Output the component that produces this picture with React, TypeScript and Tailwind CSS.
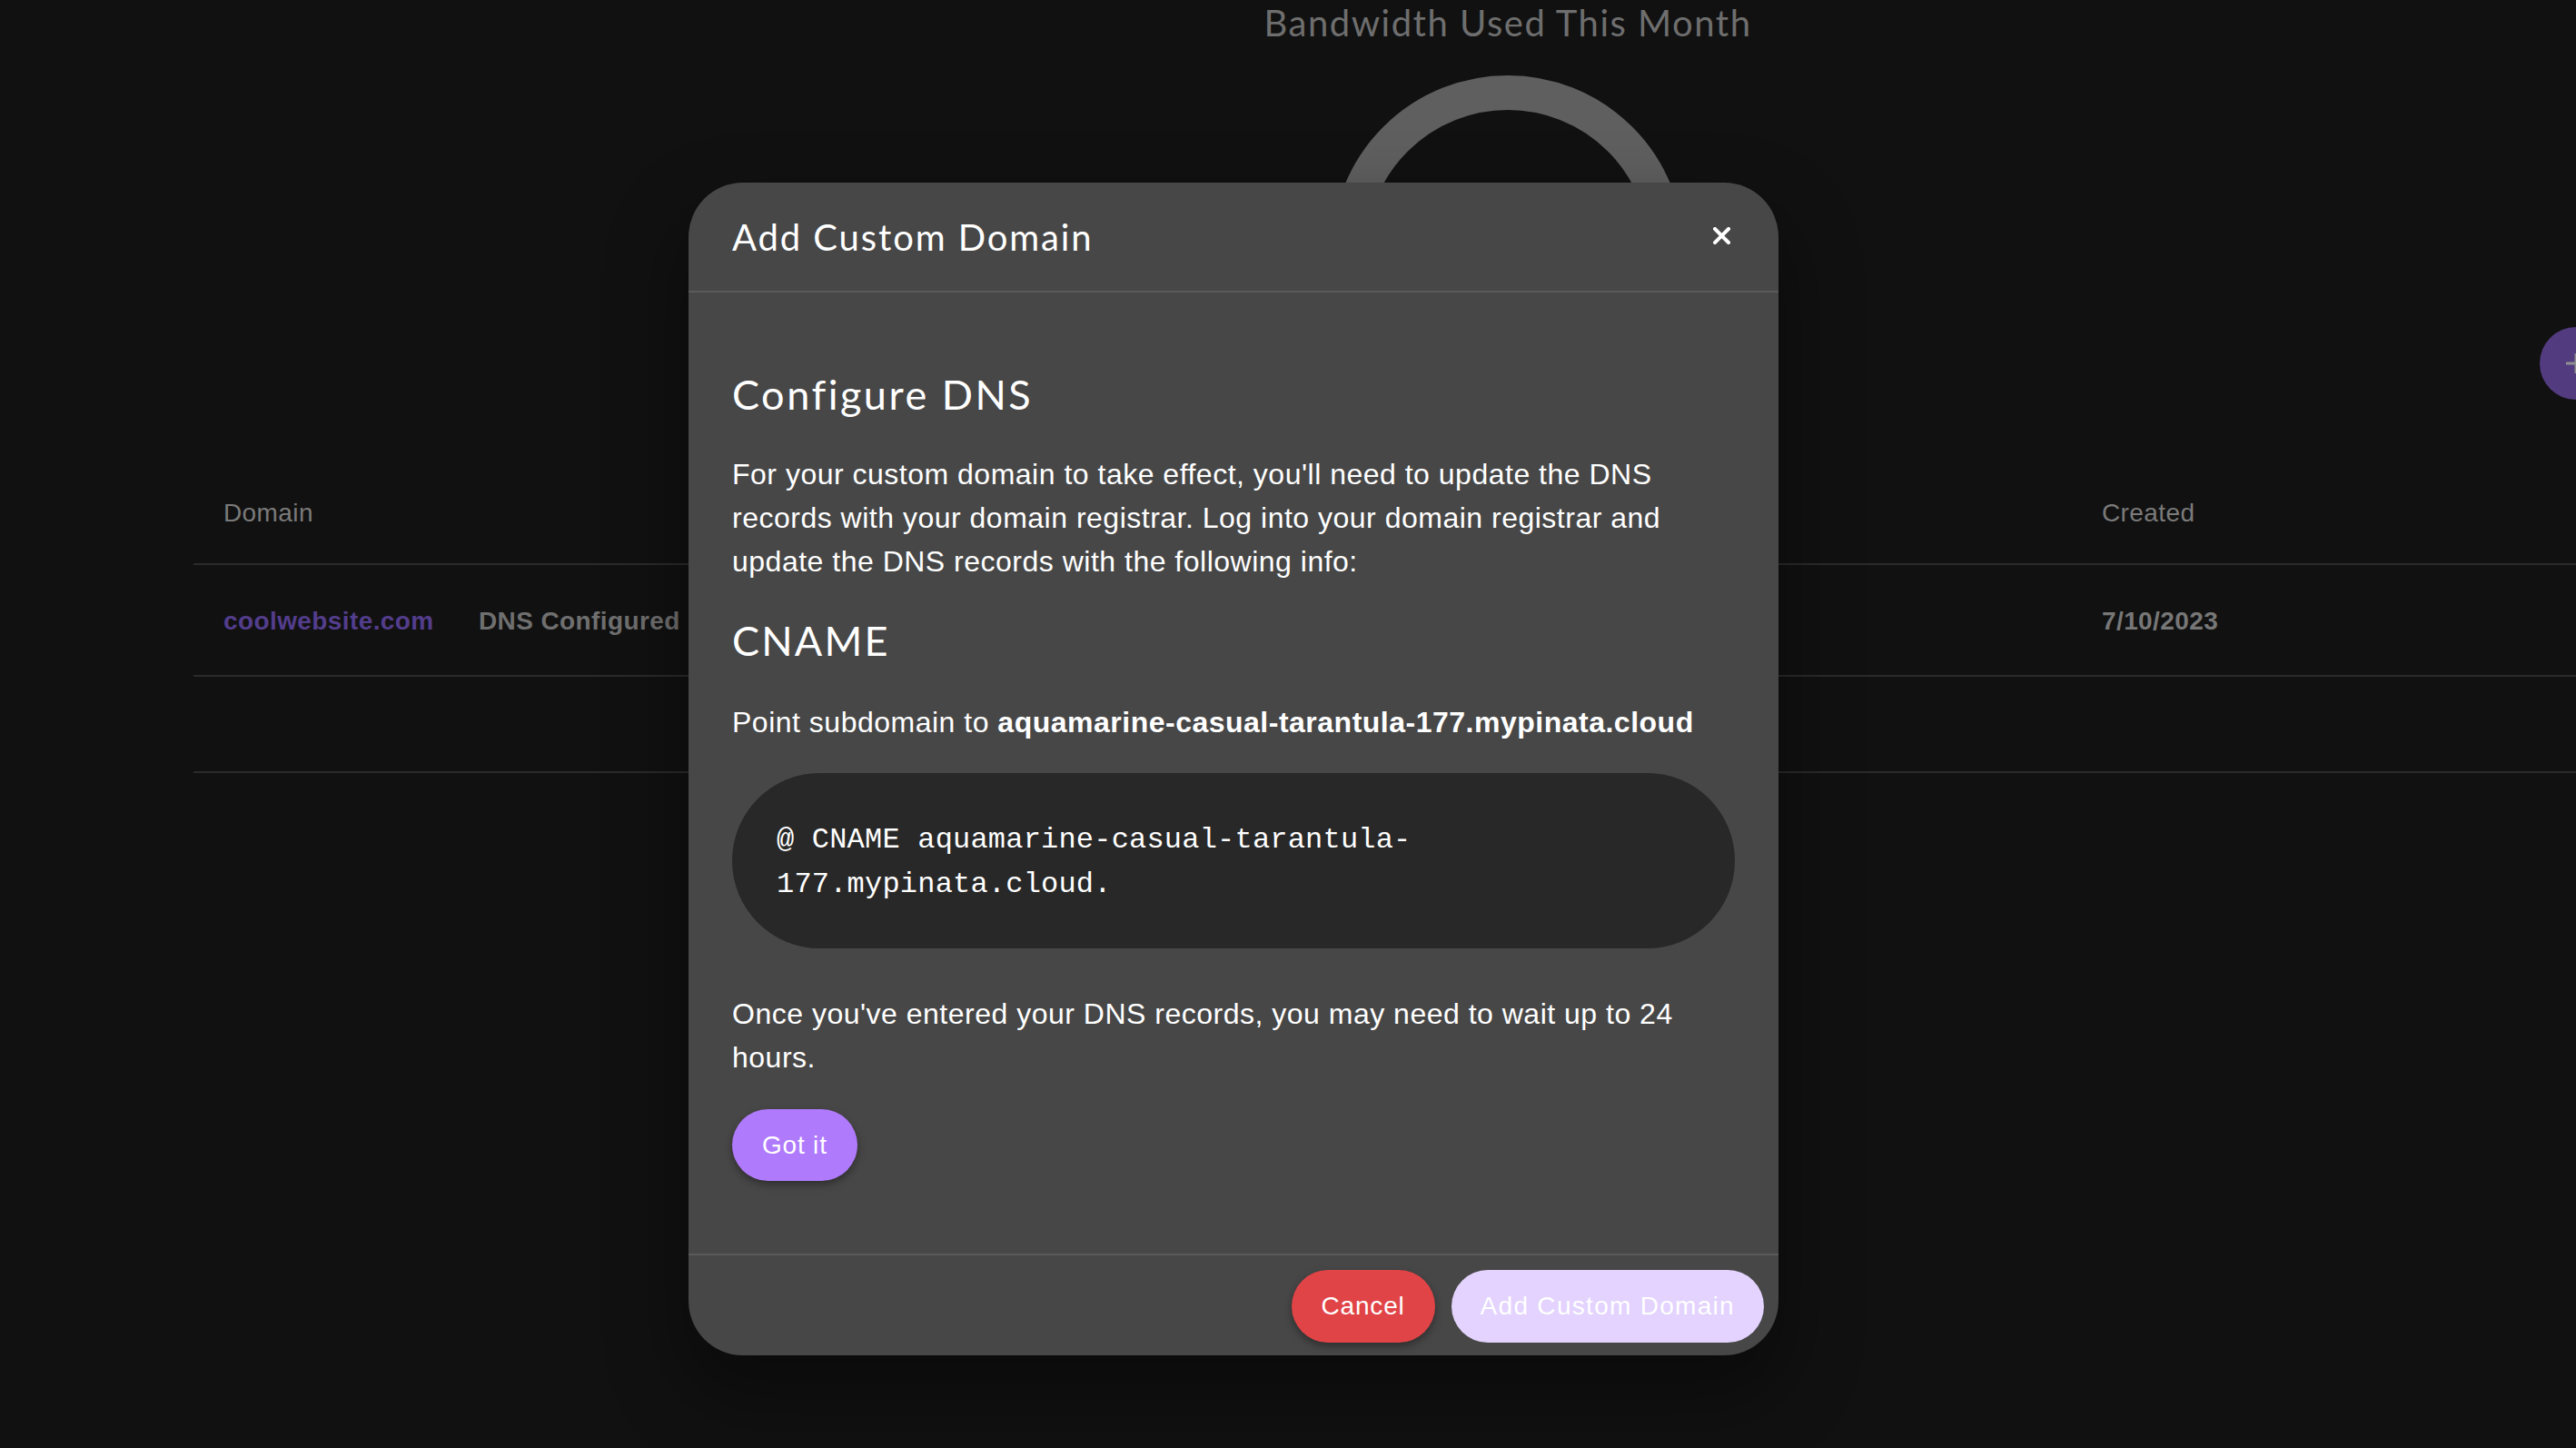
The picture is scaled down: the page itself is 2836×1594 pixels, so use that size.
import React from "react";

const heading = { fontFamily: "Lato, 'Noto Sans', sans-serif" } as const;

export default function App() {
  return (
    <div
      className="relative w-[2836px] h-[1594px] overflow-hidden bg-[#111111]"
      style={{ fontFamily: "'Liberation Sans', Arial, sans-serif" }}
    >
      {/* Background page */}
      <div className="flex flex-col">
        <div className="h-[360px] pl-[484px] flex flex-col items-center">
          <div className="text-[40px] leading-[50px] tracking-[1.5px] text-[#6e6e6e]" style={heading}>
            Bandwidth Used This Month
          </div>
          <svg width="400" height="260" viewBox="0 0 400 260" className="mt-[14px]">
            <path d="M 25 213 A 175 175 0 0 1 375 213" fill="none" stroke="#5f5f5f" strokeWidth="38" />
          </svg>
        </div>
        <div className="h-[80px] flex justify-end">
          <div className="w-[80px] h-[80px] -mr-[40px] rounded-full bg-[#533b80] flex items-center justify-center">
            <svg width="26" height="26" viewBox="0 0 26 26">
              <path d="M13 2 V24 M2 13 H24" stroke="#8f8f8f" strokeWidth="3" />
            </svg>
          </div>
        </div>
        <div className="ml-[213px] mt-[66px] flex flex-col text-[28px] tracking-[0.4px]">
          <div className="grid grid-cols-[282px_1788px_1fr] h-[116px] items-center border-b-2 border-[#2a2a2a] text-[#7a7a7a]">
            <div className="pl-[33px] pt-[4px]">Domain</div>
            <div className="pl-[32px]"></div>
            <div className="pl-[31px] pt-[4px]">Created</div>
          </div>
          <div className="grid grid-cols-[282px_1788px_1fr] h-[123px] items-center border-b-2 border-[#2a2a2a] font-bold">
            <div className="pl-[33px] pt-[2px] text-[#533d8c]">coolwebsite.com</div>
            <div className="pl-[32px] pt-[2px] text-[#6f6f6f]">DNS Configured</div>
            <div className="pl-[31px] pt-[2px] text-[#777777]">7/10/2023</div>
          </div>
          <div className="h-[106px] border-b-2 border-[#2a2a2a]"></div>
        </div>
      </div>

      {/* Modal dialog */}
      <div className="absolute left-[758px] top-[201px] w-[1200px] rounded-[60px] bg-[#474747] flex flex-col overflow-hidden shadow-[0_40px_80px_10px_rgba(0,0,0,0.35)]">
        <div className="h-[119px] flex items-center justify-between pl-[48px] pr-[53px]">
          <div className="text-[40px] leading-[48px] tracking-[1.9px] text-white" style={heading}>
            Add Custom Domain
          </div>
          <svg width="19" height="19" viewBox="0 0 19 19" className="-mt-[2px]">
            <path d="M2 2 L17 17 M17 2 L2 17" stroke="#ffffff" strokeWidth="4" strokeLinecap="square" />
          </svg>
        </div>
        <div className="h-[2px] bg-[#5a5a5a]" />
        <div className="px-[48px] pt-[80px] pb-[80px] flex flex-col items-start text-white">
          <div className="text-[45px] leading-[64px] tracking-[2.5px]" style={heading}>
            Configure DNS
          </div>
          <p className="mt-[32px] text-[32px] leading-[48px] tracking-[0.5px]">
            For your custom domain to take effect, you'll need to update the DNS records with your domain
            registrar. Log into your domain registrar and update the DNS records with the following info:
          </p>
          <div className="mt-[31px] text-[45px] leading-[64px] tracking-[2.2px]" style={heading}>
            CNAME
          </div>
          <p className="mt-[34px] text-[32px] leading-[48px] tracking-[0.5px]">
            Point subdomain to <span className="font-bold">aquamarine-casual-tarantula-177.mypinata.cloud</span>
          </p>
          <div className="mt-[32px] w-full h-[193px] rounded-full bg-[#282828] px-[49px] flex items-center">
            <code
              className="block w-[1005px] pt-[2px] text-[32px] leading-[49px] tracking-[0.2px] text-white break-words"
              style={{ fontFamily: "'Liberation Mono', 'Courier New', monospace" }}
            >
              @ CNAME aquamarine-casual-tarantula-177.mypinata.cloud.
            </code>
          </div>
          <p className="mt-[48px] text-[32px] leading-[48px] tracking-[0.5px]">
            Once you've entered your DNS records, you may need to wait up to 24 hours.
          </p>
          <button className="mt-[33px] h-[79px] px-[33px] rounded-full bg-[#b07afd] text-white text-[28px] tracking-[0.8px] shadow-[0_4px_8px_rgba(0,0,0,0.35)]">
            Got it
          </button>
        </div>
        <div className="h-[2px] bg-[#5a5a5a]" />
        <div className="pt-[16px] pb-[14px] pr-[16px] flex justify-end gap-[18px]">
          <button className="h-[80px] px-[33px] rounded-full bg-[#e14447] text-white text-[28px] tracking-[0.8px] shadow-[0_4px_8px_rgba(0,0,0,0.35)]">
            Cancel
          </button>
          <button className="h-[80px] px-[32px] rounded-full bg-[#e3d3fe] text-white text-[28px] tracking-[1.3px]">
            Add Custom Domain
          </button>
        </div>
      </div>
    </div>
  );
}
